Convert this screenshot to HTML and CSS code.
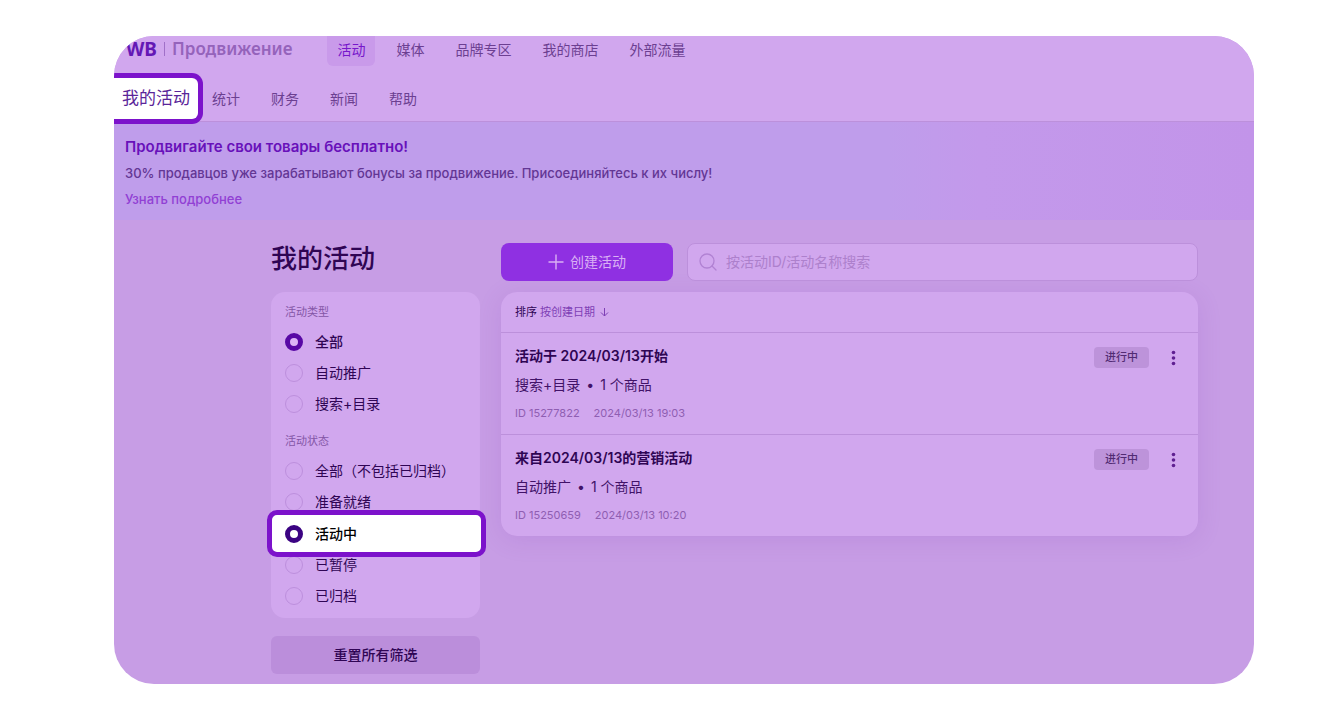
FILE: index.html
```html
<!DOCTYPE html>
<html lang="zh-CN">
<head>
<meta charset="utf-8">
<meta name="viewport" content="width=device-width, initial-scale=1">
<title>WB Продвижение</title>
<link rel="stylesheet" href="styles.css">
</head>
<body>
<div class="app">
  <header class="header">
    <div class="topbar">
      <div class="brand" lang="ru"><span class="brand-mark">WB</span><span class="brand-divider"></span><span class="brand-name">Продвижение</span></div>
      <nav class="tabs">
        <a class="tab tab-active" href="#">活动</a>
        <a class="tab" href="#">媒体</a>
        <a class="tab" href="#">品牌专区</a>
        <a class="tab" href="#">我的商店</a>
        <a class="tab" href="#">外部流量</a>
      </nav>
    </div>
    <nav class="subnav">
      <a class="subnav-current" href="#">我的活动</a>
      <a class="subnav-link" href="#">统计</a>
      <a class="subnav-link" href="#">财务</a>
      <a class="subnav-link" href="#">新闻</a>
      <a class="subnav-link" href="#">帮助</a>
    </nav>
  </header>

  <section class="banner" lang="ru">
    <h2 class="banner-title">Продвигайте свои товары бесплатно!</h2>
    <p class="banner-text">30% продавцов уже зарабатывают бонусы за продвижение. Присоединяйтесь к их числу!</p>
    <a class="banner-link" href="#">Узнать подробнее</a>
  </section>

  <div class="content">
    <aside class="sidebar">
      <h1 class="title">我的活动</h1>
      <form class="filters">
        <fieldset class="group">
          <legend class="group-label">活动类型</legend>
          <label class="option"><input class="radio" type="radio" name="type" checked><span>全部</span></label>
          <label class="option"><input class="radio" type="radio" name="type"><span>自动推广</span></label>
          <label class="option"><input class="radio" type="radio" name="type"><span>搜索+目录</span></label>
        </fieldset>
        <fieldset class="group">
          <legend class="group-label">活动状态</legend>
          <label class="option"><input class="radio" type="radio" name="status"><span>全部（不包括已归档）</span></label>
          <label class="option"><input class="radio" type="radio" name="status"><span>准备就绪</span></label>
          <label class="option option-highlight"><input class="radio" type="radio" name="status" checked><span>活动中</span></label>
          <label class="option"><input class="radio" type="radio" name="status"><span>已暂停</span></label>
          <label class="option"><input class="radio" type="radio" name="status"><span>已归档</span></label>
        </fieldset>
      </form>
      <button class="reset" type="button">重置所有筛选</button>
    </aside>

    <main class="main">
      <div class="toolbar">
        <button class="create" type="button">
          <svg width="16" height="16" viewBox="0 0 16 16" fill="none" stroke="currentColor" stroke-width="1.4" aria-hidden="true"><path d="M8 0.500v15M0.500 8h15"/></svg>
          <span>创建活动</span>
        </button>
        <label class="search">
          <svg width="18" height="18" viewBox="0 0 18 18" fill="none" stroke="currentColor" stroke-width="1.3" stroke-linecap="round" aria-hidden="true"><circle cx="8" cy="8" r="7"/><path d="M13 13l4 4"/></svg>
          <input class="search-input" type="text" aria-label="搜索" placeholder="按活动ID/活动名称搜索">
        </label>
      </div>

      <section class="list">
        <div class="sort">
          <span>排序</span>
          <button class="sort-button" type="button">按创建日期
            <svg width="9" height="10" viewBox="0 0 9 10" fill="none" stroke="currentColor" aria-hidden="true"><path d="M4.500 1v8M1 5.500l3.500 3.500L8 5.500"/></svg>
          </button>
        </div>
        <article class="item">
          <div class="item-info">
            <h3 class="item-title">活动于 2024/03/13开始</h3>
            <p class="item-kind"><span>搜索+目录</span><span>•</span><span>1 个商品</span></p>
            <p class="item-meta"><span>ID 15277822</span><span>2024/03/13 19:03</span></p>
          </div>
          <div class="item-side">
            <span class="badge">进行中</span>
            <button class="more" type="button" aria-label="更多">
              <svg width="5" height="16" viewBox="0 0 5 16" fill="currentColor" aria-hidden="true"><circle cx="2.500" cy="2.500" r="1.800"/><circle cx="2.500" cy="8" r="1.800"/><circle cx="2.500" cy="13.500" r="1.800"/></svg>
            </button>
          </div>
        </article>
        <article class="item">
          <div class="item-info">
            <h3 class="item-title">来自2024/03/13的营销活动</h3>
            <p class="item-kind"><span>自动推广</span><span>•</span><span>1 个商品</span></p>
            <p class="item-meta"><span>ID 15250659</span><span>2024/03/13 10:20</span></p>
          </div>
          <div class="item-side">
            <span class="badge">进行中</span>
            <button class="more" type="button" aria-label="更多">
              <svg width="5" height="16" viewBox="0 0 5 16" fill="currentColor" aria-hidden="true"><circle cx="2.500" cy="2.500" r="1.800"/><circle cx="2.500" cy="8" r="1.800"/><circle cx="2.500" cy="13.500" r="1.800"/></svg>
            </button>
          </div>
        </article>
      </section>
    </main>
  </div>
</div>
</body>
</html>
```
FILE: styles.css
```css
:root {
  --surface: #d1a7ee;
  --canvas: #c79de5;
  --line: #bc90db;
  --ink: #2f0554;
  --muted: #8456a6;
  --accent: #7c12cb;
}

* { box-sizing: border-box; }

body {
  margin: 0;
  padding: 36px 90px 36px 114px;
  min-height: 100vh;
  display: flex;
  background: #fff;
  color: var(--ink);
  font: 14px/20px Inter, "Noto Sans CJK SC", sans-serif;
}

h1, h2, h3, p { margin: 0; }
a { color: inherit; text-decoration: none; }
button, input { font: inherit; color: inherit; }
button { border: 0; padding: 0; background: none; cursor: pointer; }

.app {
  flex: 1;
  min-width: 0;
  border-radius: 40px;
  overflow: hidden;
  background: var(--canvas);
}

.header {
  background: var(--surface);
  border-bottom: 1px solid var(--line);
}

.topbar {
  display: flex;
  align-items: flex-start;
  gap: 35px;
  height: 41px;
  padding-left: 12px;
}

.brand {
  display: flex;
  align-items: center;
  gap: 7px;
  height: 26px;
  font: 600 17px/26px "Noto Sans", sans-serif;
}
.brand-mark { color: #6418b5; font-weight: 700; font-size: 19px; }
.brand-divider { width: 1px; height: 14px; background: #a070c8; }
.brand-name { color: #9563bb; }

.tabs { display: flex; gap: 11px; color: #6c3f91; }
.tab { padding: 4px 10px 6px; border-radius: 0 0 6px 6px; }
.tab-active { background: #c99aea; color: #7717cb; }

.subnav {
  display: flex;
  align-items: center;
  gap: 31px;
  height: 44px;
  color: #6c3f91;
}
.subnav-current {
  position: relative;
  height: 51px;
  margin: -5px -22px -3px 0;
  padding: 0 8px;
  border: 5px solid var(--accent);
  border-left: 0;
  border-radius: 0 11px 11px 0;
  background: #fff;
  color: #5a2599;
  font-size: 17px;
  line-height: 41px;
}

.banner {
  padding: 12px 11px 8px;
  background: linear-gradient(90deg, #bf9deb 0%, #bf9deb 68%, #c399eb 76%, #c294e9 100%);
  line-height: 26px;
}
.banner-title { color: #6811ba; font-size: 15px; font-weight: 600; line-height: 26px; }
.banner-text { color: #633694; font-size: 13px; font-weight: 500; }
.banner-link { display: block; width: fit-content; color: #9140d4; font-size: 13px; font-weight: 500; }

.content {
  display: grid;
  grid-template-columns: 209px minmax(0, 1fr);
  gap: 21px;
  padding: 23px 56px 10px 157px;
}

.title { margin-bottom: 17px; font-size: 26px; font-weight: 500; line-height: 32px; }

.filters {
  padding: 10px 14px 7px;
  border-radius: 14px;
  background: var(--surface);
}
.group { margin: 0; padding: 0; border: 0; }
.group + .group { margin-top: 12px; }
.group-label { padding: 0; margin-bottom: 4px; color: var(--muted); font-size: 11px; }

.option { display: flex; align-items: center; gap: 12px; height: 31px; }
.option:has(.radio:checked) { font-weight: 500; }
.option-highlight {
  position: relative;
  height: 47px;
  margin: -7px -20px -8px -18px;
  padding: 0 13px;
  border: 5px solid var(--accent);
  border-radius: 10px;
  background: #fff;
  color: #000;
}

.radio {
  appearance: none;
  flex: none;
  width: 18px;
  height: 18px;
  margin: 0;
  border: 1px solid #bd8fdd;
  border-radius: 50%;
}
.radio:checked { border: 5px solid #5808a5; background: #dcb4f6; }
.option-highlight .radio:checked { border-color: #3b0382; background: #fff; }

.reset {
  width: 100%;
  height: 38px;
  margin-top: 18px;
  border-radius: 6px;
  background: #bb8edb;
  font-weight: 500;
}

.toolbar { display: flex; gap: 14px; margin-bottom: 11px; }
.create {
  display: flex;
  align-items: center;
  justify-content: center;
  gap: 6px;
  width: 172px;
  height: 38px;
  border-radius: 8px;
  background: #8f30e2;
  color: #dab0f4;
}
.search {
  flex: 1;
  display: flex;
  align-items: center;
  gap: 9px;
  height: 38px;
  padding: 0 11px;
  border: 1px solid var(--line);
  border-radius: 8px;
  background: var(--surface);
  color: #b182d3;
}
.search-input { flex: 1; min-width: 0; padding: 0; border: 0; outline: 0; background: none; color: var(--ink); }
.search-input::placeholder { color: #ad80cc; opacity: 1; }

.list {
  border-radius: 16px;
  background: var(--surface);
  box-shadow: 0 4px 24px rgba(130, 60, 185, 0.14);
}
.sort { display: flex; align-items: center; gap: 3px; height: 40px; padding: 0 14px; font-size: 11px; }
.sort-button { display: flex; align-items: center; gap: 5px; color: #7e40b5; }

.item {
  display: flex;
  justify-content: space-between;
  padding: 12px 17px 11px 14px;
  border-top: 1px solid var(--line);
}
.item-info { display: grid; gap: 7px; }
.item-title { font-size: 14px; font-weight: 600; line-height: 22px; }
.item-kind { display: flex; gap: 6px; line-height: 22px; color: #411268; }
.item-meta { display: flex; gap: 14px; color: #8f5eb2; font-size: 11px; }

.item-side { display: flex; align-items: flex-start; gap: 16px; padding-top: 2px; }
.badge {
  padding: 0 11px;
  border-radius: 4px;
  background: #bd93da;
  color: #522c73;
  font-size: 11px;
  font-weight: 500;
  line-height: 21px;
}
.more { display: flex; align-items: center; justify-content: center; width: 16px; height: 21px; color: #5f1f91; }
```
